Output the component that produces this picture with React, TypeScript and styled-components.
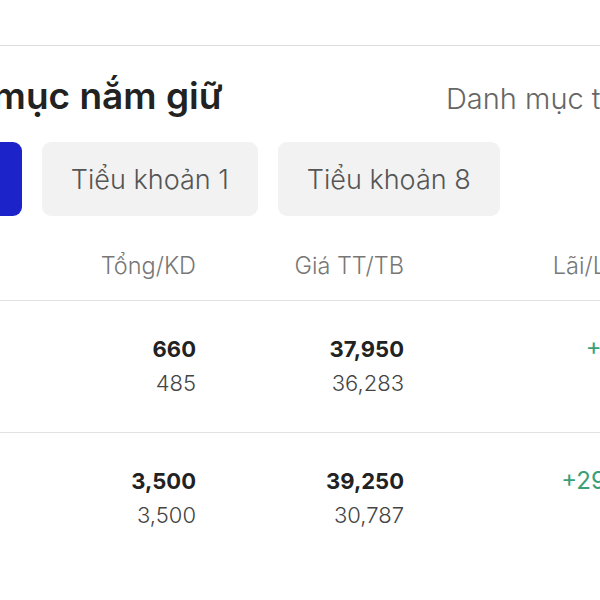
import styled, { createGlobalStyle } from "styled-components";

// Holdings panel, cropped the same way as the phone screenshot

const GlobalStyle = createGlobalStyle`
  html, body {
    margin: 0;
    padding: 0;
    background: #ffffff;
  }
  body {
    font-family: Inter, "Noto Sans", sans-serif;
    overflow: hidden;
  }
`;

const Viewport = styled.div`
  width: 600px;
  height: 600px;
  overflow: hidden;
`;

const Sheet = styled.div`
  width: 840px;
  margin-left: -134px; /* the screen is cropped on the left */
  padding-top: 45px;
`;

const Section = styled.section`
  border-top: 1px solid #dddddd;
  padding: 30px 24px 0;
`;

const TitleRow = styled.div`
  display: grid;
  grid-template-columns: 556px 1fr;
  align-items: baseline;
  white-space: nowrap;
`;

const Title = styled.h2`
  margin: 0;
  font-size: 37px;
  line-height: 40px;
  font-weight: 600;
  color: #222222;
`;

const SideLink = styled.span`
  font-size: 29px;
  font-weight: 300;
  color: #666666;
`;

const Tabs = styled.div`
  display: flex;
  gap: 20px;
  margin-top: 26px;
  margin-left: -2px; /* chip row is scrolled a bit */
`;

const Tab = styled.button<{ $active?: boolean }>`
  flex-shrink: 0;
  height: 74px;
  padding: 0 29px;
  border: none;
  border-radius: 9px;
  font-family: inherit;
  font-size: 27px;
  font-weight: 300;
  background: ${(p) => (p.$active ? "#1c24c9" : "#f2f2f2")};
  color: ${(p) => (p.$active ? "#ffffff" : "#555555")};
`;

const Table = styled.div`
  margin-top: 35px;
`;

const COLS = "188px 118px 208px 303px";

const HeadRow = styled.div`
  display: grid;
  grid-template-columns: ${COLS};
  padding-bottom: 19px;
  border-bottom: 1px solid #e2e2e2;
  white-space: nowrap;
`;

const HeadCell = styled.div<{ $left?: boolean }>`
  font-size: 23.5px;
  line-height: 30px;
  font-weight: 300;
  color: #777777;
  text-align: ${(p) => (p.$left ? "left" : "right")};
`;

const Row = styled.div`
  display: grid;
  grid-template-columns: ${COLS};
  padding: 31px 0 32px;
  border-bottom: 1px solid #e2e2e2;
  white-space: nowrap;

  &:last-child {
    border-bottom: none;
  }
`;

const Cell = styled.div<{ $left?: boolean }>`
  display: flex;
  flex-direction: column;
  align-items: ${(p) => (p.$left ? "flex-start" : "flex-end")};
`;

const Main = styled.span<{ $up?: boolean }>`
  font-size: ${(p) => (p.$up ? "24px" : "22px")};
  line-height: 34px;
  font-weight: ${(p) => (p.$up ? 400 : 700)};
  color: ${(p) => (p.$up ? "#3a9f77" : "#222222")};
`;

const Sub = styled.span<{ $up?: boolean }>`
  font-size: 22px;
  line-height: 34px;
  font-weight: 300;
  color: ${(p) => (p.$up ? "#3a9f77" : "#444444")};
`;

const holdings = [
  { code: "MBB", exchange: "HOSE", total: "660", avail: "485", price: "37,950", avg: "36,283", pnl: "+1,100,220", pct: "+4.59%" },
  { code: "VPB", exchange: "HOSE", total: "3,500", avail: "3,500", price: "39,250", avg: "30,787", pnl: "+29,620,500", pct: "+27.49%" },
];

export default function App() {
  return (
    <Viewport>
      <GlobalStyle />
      <Sheet>
        <Section>
          <TitleRow>
            <Title>Danh mục nắm giữ</Title>
            <SideLink>Danh mục tổng hợp</SideLink>
          </TitleRow>
          <Tabs>
            <Tab $active>Tất cả</Tab>
            <Tab>Tiểu khoản 1</Tab>
            <Tab>Tiểu khoản 8</Tab>
          </Tabs>
          <Table>
            <HeadRow>
              <HeadCell $left>Mã CK</HeadCell>
              <HeadCell>Tổng/KD</HeadCell>
              <HeadCell>Giá TT/TB</HeadCell>
              <HeadCell>Lãi/Lỗ dự kiến</HeadCell>
            </HeadRow>
            {holdings.map((h) => (
              <Row key={h.code}>
                <Cell $left>
                  <Main>{h.code}</Main>
                  <Sub>{h.exchange}</Sub>
                </Cell>
                <Cell>
                  <Main>{h.total}</Main>
                  <Sub>{h.avail}</Sub>
                </Cell>
                <Cell>
                  <Main>{h.price}</Main>
                  <Sub>{h.avg}</Sub>
                </Cell>
                <Cell>
                  <Main $up>{h.pnl}</Main>
                  <Sub $up>{h.pct}</Sub>
                </Cell>
              </Row>
            ))}
          </Table>
        </Section>
      </Sheet>
    </Viewport>
  );
}
